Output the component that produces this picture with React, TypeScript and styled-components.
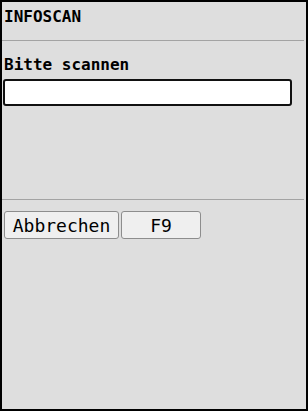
import React from "react";
import styled, { createGlobalStyle } from "styled-components";

const Global = createGlobalStyle`
  html, body { margin: 0; padding: 0; background: #dedede; }
  * { box-sizing: border-box; }
`;

const Frame = styled.div`
  width: 308px;
  height: 411px;
  border: 2px solid #000;
  background: #dedede;
  font-family: "DejaVu Sans Mono", monospace;
  color: #000;
  display: flex;
  flex-direction: column;
`;

const Header = styled.div`
  height: 38px;
  padding: 5px 0 0 2px;
  font-weight: bold;
  font-size: 16px;
  line-height: 19px;
`;

const Rule = styled.div`
  height: 1px;
  background: #a3a3a3;
  margin-right: 2px;
`;

const Body = styled.div`
  height: 158px;
  display: flex;
  flex-direction: column;
  padding: 14px 0 0 1px;
`;

const Label = styled.div`
  font-weight: bold;
  font-size: 16px;
  line-height: 19px;
  padding-left: 1px;
`;

const Field = styled.input`
  margin-top: 5px;
  width: 289px;
  height: 27px;
  border: 2px solid #111;
  border-radius: 3px;
  background: #fff;
  outline: none;
  font-family: inherit;
  font-size: 15px;
  padding: 0 4px;
`;

const Actions = styled.div`
  display: flex;
  gap: 2px;
  padding: 11px 0 0 2px;
`;

const Button = styled.button<{ $w: number }>`
  width: ${(p) => p.$w}px;
  height: 28px;
  background: #efefef;
  border: 1px solid #8d8d8d;
  border-radius: 3px;
  font-family: "DejaVu Sans Mono", monospace;
  font-size: 18px;
  color: #000;
  padding: 0;
`;

export default function App() {
  return (
    <>
      <Global />
      <Frame>
        <Header>INFOSCAN</Header>
        <Rule />
        <Body>
          <Label>Bitte scannen</Label>
          <Field type="text" />
        </Body>
        <Rule />
        <Actions>
          <Button $w={115}>Abbrechen</Button>
          <Button $w={80}>F9</Button>
        </Actions>
      </Frame>
    </>
  );
}
